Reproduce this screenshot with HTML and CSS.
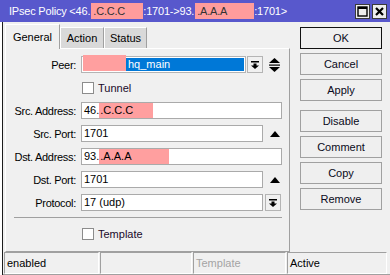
FILE: index.html
```html
<!DOCTYPE html>
<html>
<head>
<meta charset="utf-8">
<link rel="stylesheet" href="styles.css">
<title>IPsec Policy</title>
</head>
<body>
<div class="win">
  <div class="titlebar">
    <span class="title">IPsec Policy &lt;46.<span class="tmask tm1">.C.C.C</span>:1701-&gt;93.<span class="tmask tm2">.A.A.A</span>:1701&gt;</span>
    <div class="wbtns">
      <span class="wbtn"><svg width="11" height="11" viewBox="0 0 11 11"><rect x="1" y="1" width="9" height="9" fill="none" stroke="#000" stroke-width="1.4"/><rect x="1" y="1" width="9" height="2" fill="#000"/></svg></span>
      <span class="wbtn"><svg width="11" height="11" viewBox="0 0 11 11"><path d="M2 2 L9 9 M9 2 L2 9" stroke="#000" stroke-width="2.2"/></svg></span>
    </div>
  </div>

  <div class="main">
    <div class="content">
      <div class="left">
        <div class="tabs">
          <div class="tab active">General</div>
          <div class="tab">Action</div>
          <div class="tab">Status</div>
        </div>
        <div class="panel">
          <div class="row">
            <span class="lbl">Peer:</span>
            <div class="combo">
              <span class="cmask"></span>
              <span class="sel">hq_main</span>
            </div>
            <span class="ddbtn peerdd"><svg width="8" height="8" viewBox="0 0 8 8"><rect x="0" y="0" width="8" height="1.5"/><rect x="2.5" y="2.5" width="3" height="2.5"/><polygon points="0,4.5 8,4.5 4,8"/></svg></span>
            <span class="spin"><svg width="11" height="14" viewBox="0 0 11 14"><polygon points="5.5,0 11,5 0,5"/><rect x="0" y="6.5" width="11" height="1.2"/><polygon points="0,9 11,9 5.5,14"/></svg></span>
          </div>
          <div class="row">
            <span class="lbl"></span>
            <span class="check"></span><span class="ctext">Tunnel</span>
          </div>
          <div class="row">
            <span class="lbl">Src. Address:</span>
            <div class="field wide">46.<span class="fmask m-src">.C.C.C</span></div>
          </div>
          <div class="row">
            <span class="lbl">Src. Port:</span>
            <div class="field short">1701</div>
            <span class="up"><svg width="10" height="6" viewBox="0 0 10 6"><polygon points="5,0 10,6 0,6"/></svg></span>
          </div>
          <div class="row">
            <span class="lbl">Dst. Address:</span>
            <div class="field wide">93.<span class="fmask m-dst">.A.A.A</span></div>
          </div>
          <div class="row">
            <span class="lbl">Dst. Port:</span>
            <div class="field short">1701</div>
            <span class="up"><svg width="10" height="6" viewBox="0 0 10 6"><polygon points="5,0 10,6 0,6"/></svg></span>
          </div>
          <div class="row">
            <span class="lbl">Protocol:</span>
            <div class="field short">17 (udp)</div>
            <span class="ddbtn"><svg width="8" height="8" viewBox="0 0 8 8"><rect x="0" y="0" width="8" height="1.5"/><rect x="2.5" y="2.5" width="3" height="2.5"/><polygon points="0,4.5 8,4.5 4,8"/></svg></span>
          </div>
          <div class="sep"></div>
          <div class="row trow">
            <span class="lbl"></span>
            <span class="check"></span><span class="ctext">Template</span>
          </div>
        </div>
      </div>

      <div class="buttons">
        <div class="btn default">OK</div>
        <div class="btn">Cancel</div>
        <div class="btn">Apply</div>
        <div class="btn gap">Disable</div>
        <div class="btn">Comment</div>
        <div class="btn">Copy</div>
        <div class="btn">Remove</div>
      </div>
    </div>

    <div class="status">
      <div class="cell c1">enabled</div>
      <div class="cell c2"></div>
      <div class="cell c3 dim">Template</div>
      <div class="cell c4">Active</div>
    </div>
  </div>
</div>
</body>
</html>
```

FILE: styles.css
```css
body {
  margin: 0;
  background: #fff;
  font-family: "Liberation Sans", Arial, sans-serif;
  font-size: 11px;
  color: #000;
}

.win {
  width: 390px;
  height: 275px;
  display: flex;
  flex-direction: column;
  overflow: hidden;
}

/* title bar */
.titlebar {
  height: 22px;
  flex: none;
  background: #5858cc;
  color: #fff;
  display: flex;
  align-items: center;
  padding-left: 9px;
  padding-right: 3px;
}
.title {
  flex: 1;
  white-space: nowrap;
  display: flex;
  align-items: center;
  letter-spacing: -0.2px;
}
.tmask {
  display: inline-block;
  height: 16px;
  line-height: 16px;
  background: #ff9c9c;
  color: #333;
  padding-left: 2px;
  box-sizing: border-box;
}
.tm1 { width: 52px; margin-left: 1px; }
.tm2 { width: 59px; margin-left: 1px; }
.wbtns {
  display: flex;
  gap: 2px;
}
.wbtn {
  width: 15px;
  height: 15px;
  box-sizing: border-box;
  border: 1px solid #3a3a3a;
  background: #ededed;
  display: flex;
  align-items: center;
  justify-content: center;
}

/* window body */
.main {
  flex: 1;
  margin-left: 2px;
  border-left: 1px solid #1c1c1c;
  background: #f0f0f0;
  display: flex;
  flex-direction: column;
}
.content {
  display: flex;
  height: 230px;
}
.left {
  width: 285px;
  margin-left: 2px;
  padding-top: 2px;
  display: flex;
  flex-direction: column;
}

/* tabs */
.tabs {
  height: 24px;
  display: flex;
  align-items: flex-end;
}
.tab {
  height: 21px;
  line-height: 20px;
  box-sizing: border-box;
  text-align: center;
  background: #d9d9d9;
  border-top: 1px solid #fff;
  border-left: 1px solid #fff;
  border-right: 1px solid #a0a0a0;
  color: #000;
}
.tab.active {
  width: 55px;
  height: 25px;
  line-height: 24px;
  background: #f0f0f0;
  margin-bottom: -1px;
  position: relative;
  z-index: 1;
}
.tab:nth-child(2) { width: 44px; }
.tab:nth-child(3) { width: 43px; }

/* panel */
.panel {
  flex: 1;
  box-sizing: border-box;
  border-top: 1px solid #fff;
  border-left: 1px solid #fff;
  border-right: 1px solid #a0a0a0;
  border-bottom: 1px solid #a0a0a0;
  padding-top: 7px;
}
.row {
  display: flex;
  align-items: center;
  height: 17px;
  margin-bottom: 6px;
}
.lbl {
  width: 70px;
  margin-right: 5px;
  text-align: right;
  letter-spacing: -0.3px;
  white-space: nowrap;
}
.field {
  height: 17px;
  box-sizing: border-box;
  border: 1px solid #aaa;
  background: #fff;
  padding-left: 2px;
  line-height: 15px;
  display: flex;
  align-items: center;
  white-space: nowrap;
}
.wide { width: 201px; }
.short { width: 182px; }
.fmask {
  display: inline-block;
  height: 15px;
  line-height: 15px;
  background: #ff9f9f;
  padding-left: 1px;
  box-sizing: border-box;
}
.m-src { width: 54px; }
.m-dst { width: 70px; }

.combo {
  width: 165px;
  height: 17px;
  box-sizing: border-box;
  border: 1px solid #b4b4b4;
  background: #fff;
  padding: 1px;
  display: flex;
}
.cmask {
  width: 43px;
  background: #ff9f9f;
  margin-top: -3px;
}
.sel {
  flex: 1;
  background: #0078d7;
  color: #fff;
  padding-left: 2px;
  line-height: 13px;
}
.ddbtn {
  width: 16px;
  height: 17px;
  box-sizing: border-box;
  border: 1px solid #b4b4b4;
  background: #f0f0f0;
  margin-left: 2px;
  display: flex;
  align-items: center;
  justify-content: center;
}
.peerdd { margin-left: 1px; }
.spin {
  margin-left: 6px;
  display: flex;
}
.up {
  margin-left: 7px;
  display: flex;
}

.check {
  width: 12px;
  height: 12px;
  box-sizing: border-box;
  border: 1px solid #8c8c8c;
  background: #fff;
  margin-left: 1px;
}
.ctext {
  margin-left: 4px;
  color: #1a0a2a;
}

.sep {
  height: 1px;
  margin: 1px 0 0 8px;
  width: 268px;
  background: #a0a0a0;
}
.trow {
  margin-top: 7px;
}

/* right buttons */
.buttons {
  margin-left: 10px;
  width: 82px;
  padding-top: 5px;
  display: flex;
  flex-direction: column;
  gap: 4px;
}
.btn {
  height: 22px;
  box-sizing: border-box;
  border: 1px solid #a0a0a0;
  background: #efefef;
  text-align: center;
  line-height: 20px;
  color: #0a0a20;
}
.btn.default {
  border: 1px solid #111;
}
.btn.gap {
  margin-top: 5px;
}

/* status bar */
.status {
  margin-top: 0;
  height: 22px;
  display: flex;
  gap: 1px;
  padding-left: 1px;
  border-bottom: 1px solid #a0a0a0;
}
.cell {
  height: 22px;
  box-sizing: border-box;
  border-top: 1px solid #a0a0a0;
  border-left: 1px solid #a0a0a0;
  border-right: 1px solid #fff;
  border-bottom: 1px solid #fff;
  padding-left: 2px;
  line-height: 20px;
}
.c1 { width: 95px; }
.c2 { width: 92px; }
.c3 { width: 93px; }
.c4 { width: 100px; }
.dim { color: #a4a4a4; }
```
